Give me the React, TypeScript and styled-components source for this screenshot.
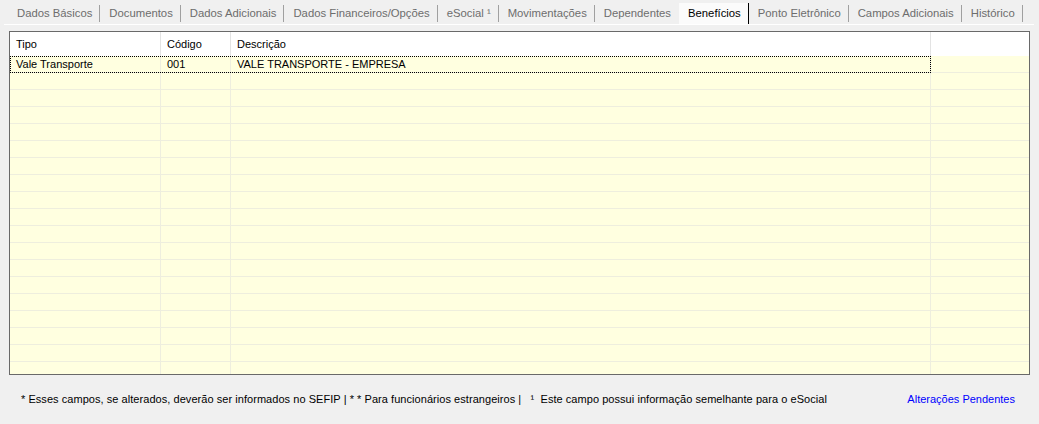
import React from 'react';
import styled, { createGlobalStyle } from 'styled-components';

const GlobalStyle = createGlobalStyle`
	html, body {
		margin: 0;
		padding: 0;
		background: #f0f0f0;
	}
	body {
		font-family: 'Liberation Sans', Arial, sans-serif;
		font-size: 11px;
		color: #000;
	}
`;

const tabs = [
	'Dados Básicos',
	'Documentos',
	'Dados Adicionais',
	'Dados Financeiros/Opções',
	'eSocial ¹',
	'Movimentações',
	'Dependentes',
	'Benefícios',
	'Ponto Eletrônico',
	'Campos Adicionais',
	'Histórico',
];

const ACTIVE = 'Benefícios';

const rows = [{ tipo: 'Vale Transporte', codigo: '001', descricao: 'VALE TRANSPORTE - EMPRESA' }];
const TOTAL_ROWS = 19;

export default function App() {
	const filled = Array.from({ length: TOTAL_ROWS }, (_, i) => rows[i] || null);

	return (
		<Page>
			<GlobalStyle />
			<TabStrip>
				{tabs.map((t, i) => (
					<Tab key={t} $active={t === ACTIVE} $beforeActive={tabs[i + 1] === ACTIVE}>
						{t}
					</Tab>
				))}
			</TabStrip>

			<GridBox>
				<HeaderRow>
					<HeaderCell>Tipo</HeaderCell>
					<HeaderCell>Código</HeaderCell>
					<HeaderCell>Descrição</HeaderCell>
					<HeaderCell />
				</HeaderRow>
				{filled.map((r, i) => (
					<Row key={i} $focused={i === 0}>
						<Cell>{r?.tipo}</Cell>
						<Cell>{r?.codigo}</Cell>
						<Cell>{r?.descricao}</Cell>
						<Cell />
					</Row>
				))}
			</GridBox>

			<Footer>
				<Notes>
					* Esses campos, se alterados, deverão ser informados no SEFIP | * * Para funcionários estrangeiros |&nbsp;
					&nbsp;¹&nbsp; Este campo possui informação semelhante para o eSocial
				</Notes>
				<PendingLink>Alterações Pendentes</PendingLink>
			</Footer>
		</Page>
	);
}

const Page = styled.div`
	width: 1039px;
	height: 424px;
	padding: 3px 0 0 0;
	box-sizing: border-box;
	display: flex;
	flex-direction: column;
	overflow: hidden;
`;

const TabStrip = styled.div`
	display: flex;
	align-items: stretch;
	height: 21px;
	margin: 0 5px 0 4px;
	padding-left: 4px;
	border-bottom: 1px solid #ffffff;
	font-size: 11.3px;
`;

const Tab = styled.div<{ $active: boolean; $beforeActive: boolean }>`
	display: flex;
	align-items: center;
	padding: 0 8px 0 9px;
	color: ${(p) => (p.$active ? '#000' : '#6d6d6d')};
	background: ${(p) => (p.$active ? '#fbfbfb' : 'transparent')};
	position: relative;
	white-space: nowrap;

	&::after {
		content: '';
		position: absolute;
		right: 0;
		top: ${(p) => (p.$active ? '0' : '2px')};
		bottom: ${(p) => (p.$active ? '0' : '2px')};
		width: 1px;
		background: ${(p) => (p.$active ? '#000' : p.$beforeActive ? 'transparent' : '#a0a0a0')};
	}
`;

const GridBox = styled.div`
	margin: 6px 9px 0 9px;
	height: 350px;
	box-sizing: border-box;
	border: 1px solid #696969;
	background: #ffffff;
	overflow: hidden;
`;

const columns = '151px 70px 700px 1fr';

const HeaderRow = styled.div`
	display: grid;
	grid-template-columns: ${columns};
	height: 24px;
	background: #fff;
`;

const HeaderCell = styled.div`
	display: flex;
	align-items: center;
	padding-left: 6px;
	border-right: 1px solid #e3e3e3;
	&:last-child {
		border-right: none;
	}
`;

const Row = styled.div<{ $focused: boolean }>`
	display: grid;
	grid-template-columns: ${columns};
	height: 17px;
	box-sizing: border-box;
	background: #ffffe0;
	border-bottom: 1px solid #eeeede;
	position: relative;

	${(p) =>
		p.$focused &&
		`
		&::after {
			content: '';
			position: absolute;
			left: 0;
			top: 0;
			width: 921px;
			height: 17px;
			box-sizing: border-box;
			border: 1px dotted #000;
			pointer-events: none;
		}
	`}
`;

const Cell = styled.div`
	display: flex;
	align-items: center;
	padding-left: 6px;
	border-right: 1px solid #eeeede;
	white-space: nowrap;
	overflow: hidden;
	&:last-child {
		border-right: none;
	}
`;

const Footer = styled.div`
	display: flex;
	align-items: center;
	justify-content: space-between;
	height: 50px;
	padding: 0 24px 0 21px;
`;

const Notes = styled.div`
	font-size: 11px;
	letter-spacing: 0.05px;
	color: #000;
	white-space: nowrap;
`;

const PendingLink = styled.div`
	font-size: 11px;
	color: #0000ff;
	white-space: nowrap;
`;
